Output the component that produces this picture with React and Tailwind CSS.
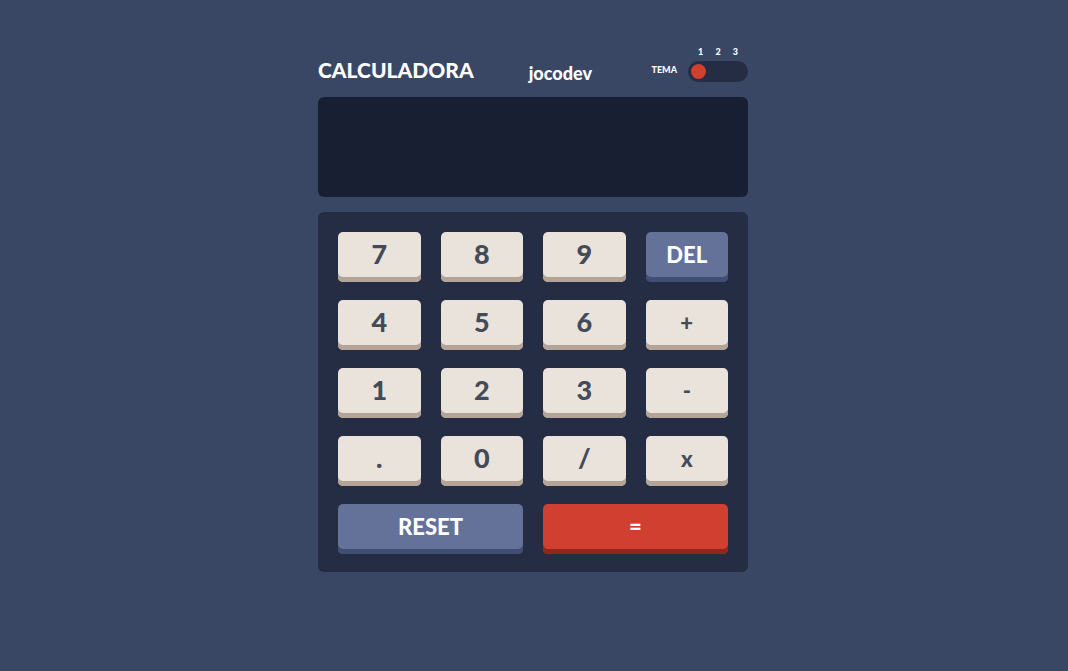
import React, { useState } from 'react'

const keys = [
  ['7', 'num'], ['8', 'num'], ['9', 'num'], ['DEL', 'del'],
  ['4', 'num'], ['5', 'num'], ['6', 'num'], ['+', 'op'],
  ['1', 'num'], ['2', 'num'], ['3', 'num'], ['-', 'op'],
  ['.', 'num'], ['0', 'num'], ['/', 'num'], ['x', 'op'],
]

function Key({ label, kind, onPress }) {
  if (kind === 'del') {
    return (
      <button onClick={ onPress } className="h-[50px] rounded-[5px] bg-[#647198] shadow-[inset_0_-5px_0_#414e73] text-white text-[22px] font-black pb-[6px]">
        { label }
      </button>
    )
  }
  return (
    <button onClick={ onPress } className={ 'h-[50px] rounded-[5px] bg-[#eae3dc] shadow-[inset_0_-5px_0_#b3a497] text-[#434a59] font-black pb-[6px] ' + (kind === 'op' ? 'text-[22px]' : 'text-[27px]') }>
      { label }
    </button>
  )
}

export default function App() {
  const [ value, setValue ] = useState('')

  const press = (k) => {
    if (k === 'DEL') return setValue(value.slice(0, -1))
    setValue(value + k)
  }

  return (
    <div className="min-h-[671px] w-full bg-[#3a4764] flex justify-center" style={{ fontFamily: 'Lato, "Open Sans", sans-serif' }}>
      <div className="w-[432px] pr-[2px] pt-[46px]">
        {/* header */}
        <div className="flex items-end h-[36px]">
          <div className="text-white text-[21px] font-black leading-none pb-[2px]">CALCULADORA</div>
          <div className="text-white text-[18px] font-black leading-none ml-[55px]">jocodev</div>
          <div className="ml-auto flex items-end">
            <div className="text-white text-[9px] font-black mr-[11px] mb-[6px]">TEMA</div>
            <div className="flex flex-col">
              <div className="flex justify-around text-white text-[9px] font-black px-[4px] mb-[3px]">
                <span>1</span><span>2</span><span>3</span>
              </div>
              <div className="w-[60px] h-[21px] rounded-full bg-[#242d44] flex items-center px-[3px]">
                <div className="w-[15px] h-[15px] rounded-full bg-[#d03f2f]" />
              </div>
            </div>
          </div>
        </div>

        {/* screen */}
        <div className="mt-[15px] h-[100px] rounded-[6px] bg-[#181f33] flex items-center justify-end px-6 text-white text-[40px] font-black">
          { value }
        </div>

        {/* keypad */}
        <div className="mt-[15px] rounded-[6px] bg-[#242d44] pt-[20px] px-[20px] pb-[18px]">
          <div className="grid grid-cols-4 gap-x-[20px] gap-y-[18px]">
            { keys.map(([ k, kind ]) => (
              <Key key={ k } label={ k } kind={ kind } onPress={ () => press(k) } />
            )) }
            <button onClick={ () => setValue('') } className="col-span-2 h-[50px] rounded-[5px] bg-[#647198] shadow-[inset_0_-5px_0_#414e73] text-white text-[22px] font-black pb-[6px]">
              RESET
            </button>
            <button className="col-span-2 h-[50px] rounded-[5px] bg-[#d03f2f] shadow-[inset_0_-5px_0_#93261a] text-white text-[22px] font-black pb-[6px]">
              =
            </button>
          </div>
        </div>
      </div>
    </div>
  )
}
